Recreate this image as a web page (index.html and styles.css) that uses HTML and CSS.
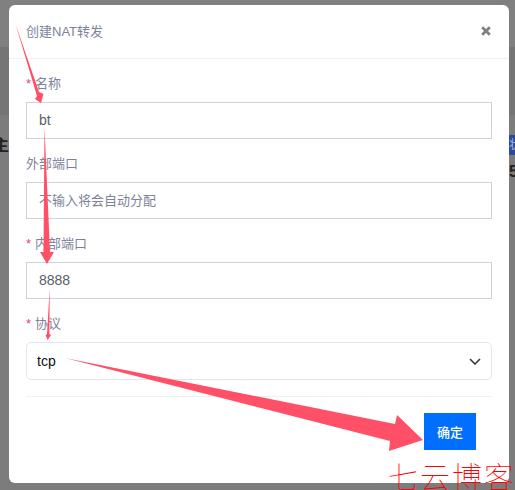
FILE: index.html
```html
<!DOCTYPE html>
<html lang="zh-CN">
<head>
  <meta charset="UTF-8" />
  <meta name="viewport" content="width=device-width, initial-scale=1.0" />
  <title>创建NAT转发</title>
  <link rel="stylesheet" href="styles.css">
</head>
<body>
  <div class="page">
    <div class="side side-left"><b class="behind-left">主</b></div>

    <div class="modal">
      <div class="modal-header">
        <span class="modal-title">创建NAT转发</span>
        <svg class="close-icon" width="10" height="10" viewBox="0 0 10 10">
          <path d="M1.2 1.2 8.8 8.8M8.8 1.2 1.2 8.8" stroke="#7f7f7f" stroke-width="2.8" fill="none" />
        </svg>
      </div>

      <form class="modal-body">
        <div class="field">
          <label><span class="required">*</span>名称</label>
          <input type="text" value="bt" />
        </div>
        <div class="field">
          <label>外部端口</label>
          <input type="text" placeholder="不输入将会自动分配" />
        </div>
        <div class="field">
          <label><span class="required">*</span>内部端口</label>
          <input type="text" value="8888" />
        </div>
        <div class="field field-last">
          <label><span class="required">*</span>协议</label>
          <div class="select-wrap">
            <select>
              <option>tcp</option>
            </select>
            <svg class="chevron" width="12" height="7" viewBox="0 0 12 7">
              <path d="M1 1 6 6 11 1" stroke="#343a40" stroke-width="1.6" fill="none" />
            </svg>
          </div>
        </div>
        <div class="modal-footer">
          <button type="button">确定</button>
        </div>
      </form>
    </div>

    <div class="side side-right">
      <span class="behind-tag">状</span>
      <b class="behind-num">5</b>
    </div>

    <!-- annotation arrows drawn on top of the screenshot -->
    <svg class="arrows" width="515" height="490" viewBox="0 0 515 490">
      <polygon points="15.5,24 39,92 43.5,94 41,103 35,99 37,96" />
      <polygon points="44.5,127 50,252 54,252 47,264 40,252 43.5,252" />
      <polygon points="49.7,288 49.4,334 51,335 47.7,340 45.5,335 47,334" />
      <polygon points="65,358 395,424 397,415 423,440 389,451 390,441" />
    </svg>
    <div class="watermark">七云博客</div>
  </div>
</body>
</html>
```

FILE: styles.css
```css
* {
  box-sizing: border-box;
}
html, body {
  margin: 0;
  height: 100%;
}
body {
  font-family: "Liberation Sans", "Noto Sans CJK SC", sans-serif;
  font-size: 13px;
  color: #7e8299;
}
.page {
  position: relative;
  display: flex;
  align-items: flex-start;
  width: 515px;
  height: 490px;
  padding-top: 5px;
  overflow: hidden;
  background: linear-gradient(#808080 47px, #757575 47px, #757575 115px, #7c7c7c 115px);
}
.side {
  flex: none;
  overflow: hidden;
  white-space: nowrap;
}
.side-left {
  width: 9px;
  padding-top: 131px;
  direction: rtl;
}
.behind-left {
  font-size: 16px;
  line-height: 20px;
  color: #222;
}
.side-right {
  width: 6px;
  padding-top: 130px;
}
.behind-tag {
  display: block;
  height: 20px;
  background: #2b4a9e;
  color: #a8b4d8;
  font-size: 12px;
  line-height: 20px;
}
.behind-num {
  display: block;
  margin-top: 8px;
  font-size: 16px;
  line-height: 18px;
  color: #222;
}
.modal {
  flex: none;
  width: 500px;
  height: 478px;
  background: #fff;
  border-radius: 6px;
}
.modal-header {
  display: flex;
  align-items: center;
  justify-content: space-between;
  height: 54px;
  padding: 0 18px 2px 17px;
  border-bottom: 1px solid #eff2f5;
}
.modal-body {
  padding: 15px 17px 0;
}
.field {
  margin-bottom: 15px;
}
.field-last {
  margin-bottom: 16px;
}
label {
  display: block;
  height: 21px;
  margin-bottom: 7px;
  line-height: 20px;
}
.required {
  margin-right: 4px;
  color: #f1416c;
}
input {
  display: block;
  width: 100%;
  height: 37px;
  padding: 0 12px 1px;
  border: 1px solid #ced2d9;
  border-radius: 0;
  outline: none;
  font: inherit;
  font-size: 14px;
  color: #5a5d66;
}
input::placeholder {
  font-size: 13px;
  color: #7e8299;
  opacity: 1;
}
.select-wrap {
  position: relative;
}
select {
  display: block;
  width: 100%;
  height: 38px;
  padding: 0 10px;
  border: 1px solid #e4e6ef;
  border-radius: 5px;
  background: #fff;
  appearance: none;
  font: inherit;
  font-size: 14px;
  color: #111;
}
.chevron {
  position: absolute;
  top: 16px;
  right: 11px;
}
.modal-footer {
  display: flex;
  justify-content: flex-end;
  padding: 16px 16px 0 0;
  border-top: 1px solid #eff2f5;
}
button {
  width: 52px;
  height: 37px;
  padding: 0;
  border: none;
  background: #006eff;
  color: #fff;
  font: 500 13px "Liberation Sans", "Noto Sans CJK SC", sans-serif;
}
.arrows {
  position: absolute;
  top: 0;
  left: 0;
  fill: #ff5068;
}
.watermark {
  position: absolute;
  top: 457px;
  left: 388px;
  font-family: "Noto Sans CJK SC", sans-serif;
  font-size: 30px;
  font-weight: 100;
  line-height: 36px;
  letter-spacing: 2px;
  white-space: nowrap;
  color: #f00;
}
```
